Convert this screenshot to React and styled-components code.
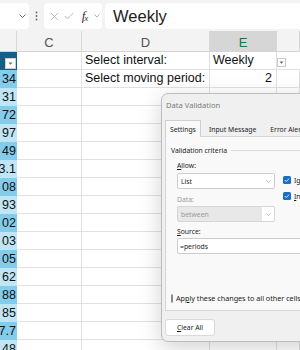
import styled, { createGlobalStyle } from "styled-components";

const GlobalStyle = createGlobalStyle`
  html, body {
    margin: 0;
    padding: 0;
    background: #fff;
  }
  body {
    overflow: hidden;
  }
`;

const Screen = styled.div`
  position: relative;
  width: 300px;
  height: 350px;
  overflow: hidden;
  background: #fff;
  font-family: "Liberation Sans", Arial, sans-serif;
`;

/* ---------- formula bar ---------- */

const FormulaBar = styled.div`
  height: 31px;
  box-sizing: border-box;
  padding-top: 3px;
  background: #f3f3f3;
  display: flex;
  align-items: flex-start;
`;

const Box = styled.div`
  height: 26px;
  box-sizing: border-box;
  background: #fff;
  border-radius: 4px;
  display: flex;
  align-items: center;
`;

const NameBox = styled(Box)`
  margin-left: -12px;
  width: 41px;
  justify-content: flex-end;
  padding-right: 3px;
`;

const Grip = styled.div`
  width: 15px;
  height: 26px;
  display: flex;
  align-items: center;
  justify-content: center;
`;

const FxBox = styled(Box)`
  width: 58px;
  padding-left: 3px;
`;

const IconSlot = styled.div`
  width: ${(p) => p.$w}px;
  display: flex;
  justify-content: center;
  align-items: center;
`;

const Fx = styled.span`
  font-family: "Liberation Serif", "Times New Roman", serif;
  font-style: italic;
  font-size: 13px;
  color: #333;
  letter-spacing: -1px;

  & sub {
    font-size: 9px;
    vertical-align: -1px;
  }
`;

const FormulaInput = styled(Box)`
  flex: 1;
  margin-left: 3px;
  margin-right: -10px;
  padding-left: 8px;
  font-size: 16.5px;
  color: #222;
`;

/* ---------- sheet ---------- */

const COLS = "17px 65px 128px 67px 1fr";

const ColumnHeaders = styled.div`
  display: grid;
  grid-template-columns: ${COLS};
  height: 21px;
  background: #f3f3f3;
  border-bottom: 1px solid #d4d4d4;
  box-sizing: border-box;
`;

const ColHead = styled.div`
  border-right: 1px solid #d8d8d8;
  display: flex;
  align-items: center;
  justify-content: center;
  padding-top: 2px;
  font-size: 13px;
  color: ${(p) => (p.$active ? "#1e7145" : "#555")};
  background: ${(p) => (p.$active ? "#d6d6d6" : "transparent")};
`;

const Sheet = styled.div`
  display: grid;
  grid-template-columns: ${COLS};
  grid-auto-rows: 18px;
`;

const Row = styled.div`
  display: contents;
`;

const Cell = styled.div`
  box-sizing: border-box;
  border-right: 1px solid #e1e1e1;
  border-bottom: 1px solid #e1e1e1;
  font-size: 12.5px;
  line-height: 17px;
  color: #111;
  padding: 0 ${(p) => (p.$right ? "4px" : "3px")};
  white-space: nowrap;
  overflow: hidden;
  text-align: ${(p) => (p.$right ? "right" : "left")};
`;

const BandCell = styled.div`
  box-sizing: border-box;
  background: ${(p) => (p.$dark ? "#83cceb" : "#c0e6f5")};
  font-size: 12.5px;
  line-height: 18px;
  color: #111;
  display: flex;
  justify-content: flex-end;
  padding-right: 1px;
  overflow: hidden;
  white-space: nowrap;
`;

const HeaderCell = styled.div`
  background: #156082;
  display: flex;
  align-items: flex-end;
  justify-content: flex-end;
  padding: 0 1px 1px 0;
`;

const FilterButton = styled.div`
  width: 11px;
  height: 11px;
  box-sizing: border-box;
  background: #fff;
  border: 1px solid #cfcfcf;
  display: flex;
  align-items: center;
  justify-content: center;
`;

const DropCell = styled.div`
  box-sizing: border-box;
  border-bottom: 1px solid #e1e1e1;
  display: flex;
  align-items: flex-end;
  padding-bottom: 2px;
`;

const DropButton = styled.div`
  width: 9px;
  height: 9px;
  box-sizing: border-box;
  background: #fff;
  border: 1px solid #c8c8c8;
  display: flex;
  align-items: center;
  justify-content: center;
`;

/* ---------- dialog ---------- */

const Dialog = styled.div`
  position: absolute;
  left: 161px;
  top: 93px;
  width: 200px;
  height: 249px;
  box-sizing: border-box;
  background: #f0f0f0;
  border: 1px solid #bdbdbd;
  border-radius: 7px;
  box-shadow: 0 6px 22px rgba(0, 0, 0, 0.18);
  font-family: "Noto Sans", "Open Sans", sans-serif;
  font-size: 6.8px;
  color: #1b1b1b;
  display: flex;
  flex-direction: column;
`;

const TitleBar = styled.div`
  height: 22px;
  display: flex;
  align-items: center;
  padding-left: 4px;
  font-size: 7.6px;
  color: #7a7a7a;
`;

const Tabs = styled.div`
  display: flex;
  margin: 4px 0 0 3px;
  height: 17px;
  position: relative;
  z-index: 1;
`;

const Tab = styled.div`
  display: flex;
  align-items: center;
  padding: 0 ${(p) => (p.$active ? "4px" : "6px")};
  border: 1px solid ${(p) => (p.$active ? "#cfcfcf" : "transparent")};
  border-bottom: none;
  background: ${(p) => (p.$active ? "#f9f9f9" : "transparent")};
  margin-right: ${(p) => (p.$active ? "1px" : "0")};
  color: #222;
  white-space: nowrap;
`;

const Panel = styled.div`
  margin: -1px 0 0 3px;
  height: 175px;
  box-sizing: border-box;
  border: 1px solid #d4d4d4;
  background: #f9f9f9;
  display: flex;
  flex-direction: column;
`;

const Legend = styled.div`
  margin-top: 8px;
  height: 10px;
  padding-left: 5px;
  display: flex;
  align-items: center;
  gap: 4px;

  &::after {
    content: "";
    flex: 1;
    height: 1px;
    background: #dcdcdc;
  }
`;

const Fields = styled.div`
  padding-left: 11px;
  display: flex;
  flex-direction: column;
`;

const Label = styled.div`
  height: 10px;
  display: flex;
  align-items: center;
  margin-top: ${(p) => p.$mt || 0}px;
  color: ${(p) => (p.$disabled ? "#9a9a9a" : "#1b1b1b")};

  & u {
    text-underline-offset: 1px;
  }
`;

const FieldRow = styled.div`
  display: flex;
  align-items: flex-start;
  margin-top: 3px;
`;

const FieldColumn = styled.div`
  width: 98px;
  display: flex;
  flex-direction: column;
`;

const Combo = styled.div`
  height: 16px;
  box-sizing: border-box;
  border: 1px solid ${(p) => (p.$disabled ? "#d6d6d6" : "#cdcdcd")};
  border-radius: 2px;
  background: ${(p) => (p.$disabled ? "#e8e8e8" : "#fff")};
  color: ${(p) => (p.$disabled ? "#9a9a9a" : "#1b1b1b")};
  display: flex;
  align-items: center;
  margin-top: ${(p) => p.$mt || 0}px;
  overflow: hidden;
`;

const ComboText = styled.div`
  flex: 1;
  padding-left: 3px;
`;

const ComboArrow = styled.div`
  width: 12px;
  align-self: stretch;
  display: flex;
  align-items: center;
  justify-content: center;
  background: #fff;
`;

const Checks = styled.div`
  margin-left: 8px;
  padding-top: 3px;
  display: flex;
  flex-direction: column;
  gap: 8px;
`;

const CheckRow = styled.div`
  display: flex;
  align-items: center;
  gap: 3px;
  height: 8px;
  white-space: nowrap;
`;

const SourceInput = styled.div`
  height: 16px;
  margin-top: 2px;
  box-sizing: border-box;
  border: 1px solid #cdcdcd;
  border-radius: 2px;
  background: #fff;
  display: flex;
  align-items: center;
  padding-left: 2px;
`;

const ApplyRow = styled.div`
  margin-top: auto;
  margin-bottom: 7px;
  padding-left: 5px;
  display: flex;
  align-items: center;
  gap: 3px;
  white-space: nowrap;
  font-size: 7.2px;
`;

const EmptyBox = styled.div`
  width: 9px;
  height: 9px;
  box-sizing: border-box;
  border: 1px solid #8a8a8a;
  border-radius: 2px;
  background: #fff;
`;

const Footer = styled.div`
  padding: 8px 0 0 3px;
`;

const Button = styled.div`
  width: 50px;
  height: 17px;
  box-sizing: border-box;
  border: 1px solid #dadada;
  border-radius: 3px;
  background: #fff;
  display: flex;
  align-items: center;
  justify-content: center;
`;

/* ---------- small drawings ---------- */

const Chevron = ({ color = "#8a8a8a", w = 7 }) => (
  <svg width={w} height={w * 0.6} viewBox="0 0 7 4.2">
    <polyline
      points="0.6,0.6 3.5,3.5 6.4,0.6"
      fill="none"
      stroke={color}
      strokeWidth="0.9"
    />
  </svg>
);

const Caret = () => (
  <svg width="5" height="3" viewBox="0 0 5 3">
    <polygon points="0.5,0.5 4.5,0.5 2.5,2.7" fill="#666" />
  </svg>
);

const CheckedBox = () => (
  <svg width="8" height="8" viewBox="0 0 8 8">
    <rect x="0" y="0" width="8" height="8" rx="1.5" fill="#1a6fc4" />
    <polyline
      points="1.9,4.1 3.3,5.5 6.1,2.6"
      fill="none"
      stroke="#fff"
      strokeWidth="0.9"
    />
  </svg>
);

// visible tail of the table column that runs off the left edge
const values = [
  "34", "31", "72", "97", "49", "3.1", "08", "93",
  "02", "03", "05", "62", "88", "85", "7.7", "48",
];

export default function App() {
  const rows = [];
  for (let i = 0; i < 17; i++) {
    let d = "";
    let e = "";
    let right = false;
    if (i === 0) {
      d = "Select interval:";
      e = "Weekly";
    } else if (i === 1) {
      d = "Select moving period:";
      e = "2";
      right = true;
    }
    rows.push(
      <Row key={i}>
        {i === 0 ? (
          <HeaderCell>
            <FilterButton>
              <Caret />
            </FilterButton>
          </HeaderCell>
        ) : (
          <BandCell $dark={i % 2 === 1}>{values[i - 1]}</BandCell>
        )}
        <Cell />
        <Cell>{d}</Cell>
        <Cell $right={right}>{e}</Cell>
        {i === 0 ? (
          <DropCell>
            <DropButton>
              <Caret />
            </DropButton>
          </DropCell>
        ) : (
          <Cell />
        )}
      </Row>
    );
  }

  return (
    <Screen>
      <GlobalStyle />
      <FormulaBar>
        <NameBox>
          <Chevron color="#555" />
        </NameBox>
        <Grip>
          <svg width="3" height="10" viewBox="0 0 3 10">
            <circle cx="1.5" cy="1.5" r="0.9" fill="#666" />
            <circle cx="1.5" cy="5" r="0.9" fill="#666" />
            <circle cx="1.5" cy="8.5" r="0.9" fill="#666" />
          </svg>
        </Grip>
        <FxBox>
          <IconSlot $w={14}>
            <svg width="9" height="9" viewBox="0 0 9 9">
              <path d="M1 1 L8 8 M8 1 L1 8" stroke="#b5b5b5" strokeWidth="0.9" />
            </svg>
          </IconSlot>
          <IconSlot $w={15}>
            <svg width="10" height="8" viewBox="0 0 10 8">
              <polyline
                points="0.8,4 3.6,7 9.2,0.8"
                fill="none"
                stroke="#b5b5b5"
                strokeWidth="0.9"
              />
            </svg>
          </IconSlot>
          <IconSlot $w={17}>
            <Fx>
              f<sub>x</sub>
            </Fx>
          </IconSlot>
          <IconSlot $w={7}>
            <Chevron color="#999" w={6} />
          </IconSlot>
        </FxBox>
        <FormulaInput>Weekly</FormulaInput>
      </FormulaBar>

      <ColumnHeaders>
        <ColHead />
        <ColHead>C</ColHead>
        <ColHead>D</ColHead>
        <ColHead $active>E</ColHead>
        <ColHead />
      </ColumnHeaders>

      <Sheet>{rows}</Sheet>

      <Dialog>
        <TitleBar>Data Validation</TitleBar>
        <Tabs>
          <Tab $active>Settings</Tab>
          <Tab>Input Message</Tab>
          <Tab>Error Alert</Tab>
        </Tabs>
        <Panel>
          <Legend>Validation criteria</Legend>
          <Fields>
            <Label $mt={5}>
              <span>
                <u>A</u>llow:
              </span>
            </Label>
            <FieldRow>
              <FieldColumn>
                <Combo>
                  <ComboText>List</ComboText>
                  <ComboArrow>
                    <Chevron color="#9a9a9a" w={5} />
                  </ComboArrow>
                </Combo>
                <Label $mt={5} $disabled>
                  Data:
                </Label>
                <Combo $mt={2} $disabled>
                  <ComboText>between</ComboText>
                  <ComboArrow>
                    <Chevron color="#9a9a9a" w={5} />
                  </ComboArrow>
                </Combo>
              </FieldColumn>
              <Checks>
                <CheckRow>
                  <CheckedBox />
                  <span>
                    Ignore <u>b</u>lank
                  </span>
                </CheckRow>
                <CheckRow>
                  <CheckedBox />
                  <span>
                    <u>I</u>n-cell dropdown
                  </span>
                </CheckRow>
              </Checks>
            </FieldRow>
            <Label $mt={4}>
              <span>
                <u>S</u>ource:
              </span>
            </Label>
            <SourceInput>=periods</SourceInput>
          </Fields>
          <ApplyRow>
            <EmptyBox />
            <span>
              Ap<u>p</u>ly these changes to all other cells with the same settings
            </span>
          </ApplyRow>
        </Panel>
        <Footer>
          <Button>
            <span>
              <u>C</u>lear All
            </span>
          </Button>
        </Footer>
      </Dialog>
    </Screen>
  );
}
